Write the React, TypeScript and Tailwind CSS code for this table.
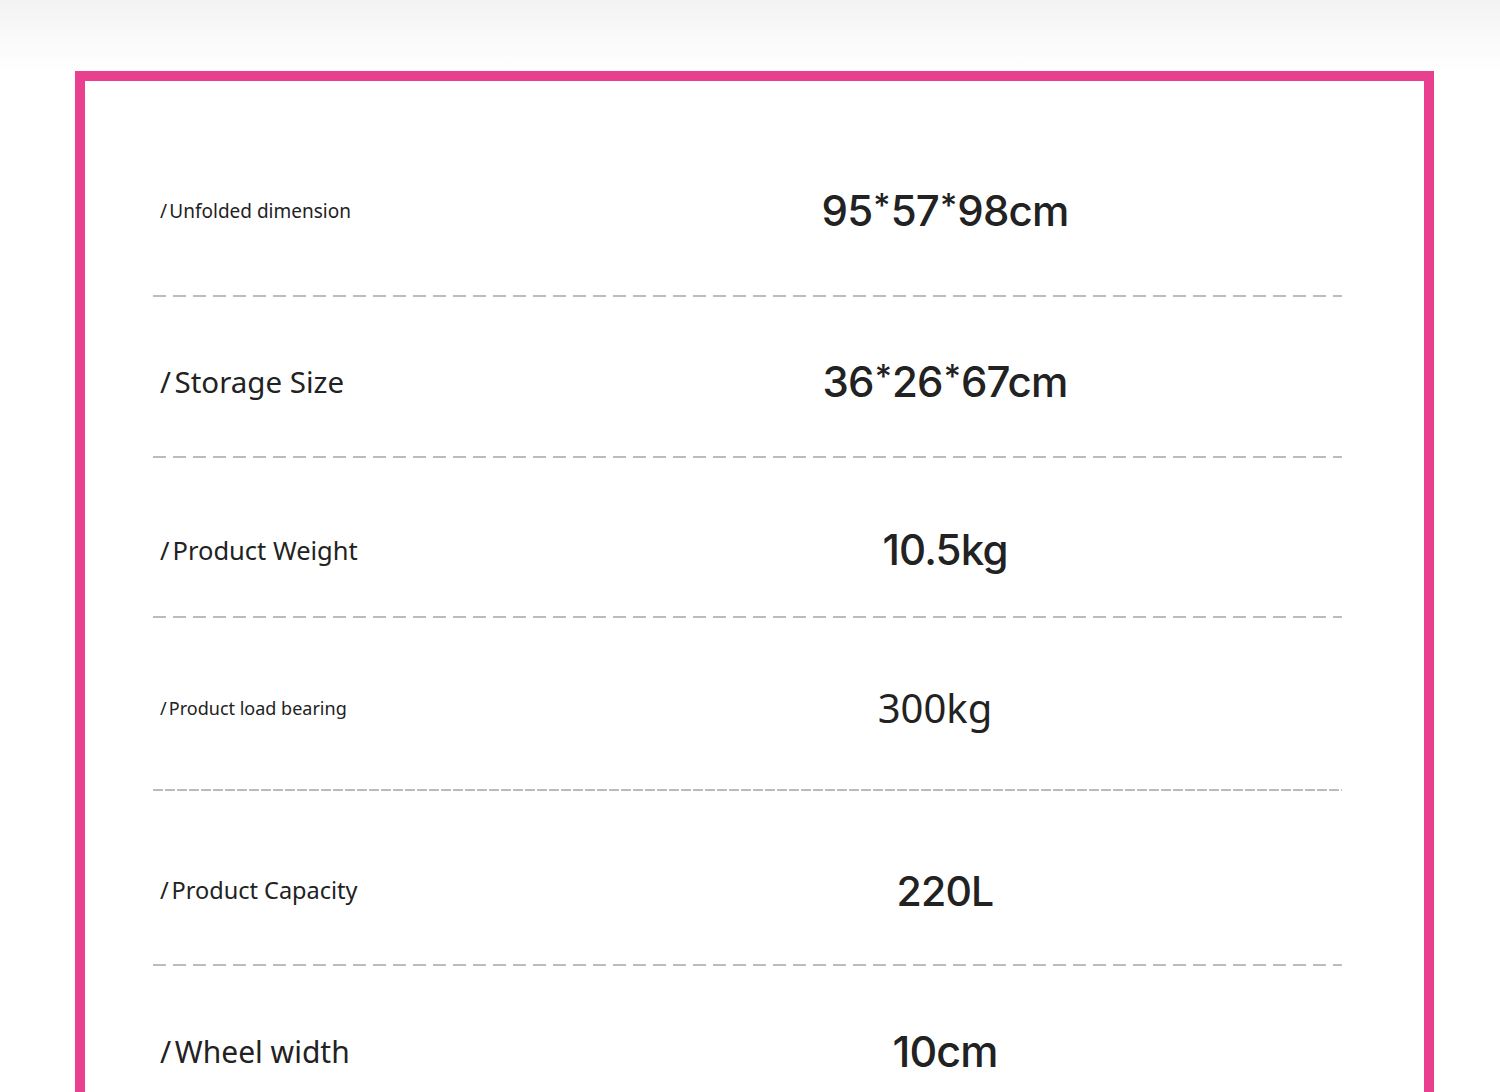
const rows = [
  {
    label: "Unfolded dimension",
    value: "95*57*98cm",
    top: "mt-[100px]",
    labelCls: "text-[19px]",
    valueCls: "font-['Inter',sans-serif] font-medium text-[42px] tracking-[-0.02em]",
    gap: "mt-[54px]",
    dash: "bg-[repeating-linear-gradient(90deg,#bcbcbc_0_13px,transparent_13px_20px)]",
  },
  {
    label: "Storage Size",
    value: "36*26*67cm",
    top: "mt-[55px]",
    labelCls: "text-[29.5px]",
    valueCls: "font-['Inter',sans-serif] font-medium text-[42px] tracking-[-0.02em]",
    gap: "mt-[44px]",
    dash: "bg-[repeating-linear-gradient(90deg,#bcbcbc_0_13px,transparent_13px_20px)]",
  },
  {
    label: "Product Weight",
    value: "10.5kg",
    top: "mt-[62px]",
    labelCls: "text-[25.5px]",
    valueCls: "font-['Inter',sans-serif] font-medium text-[42px] tracking-[-0.02em]",
    gap: "mt-[36px]",
    dash: "bg-[repeating-linear-gradient(90deg,#bcbcbc_0_13px,transparent_13px_20px)]",
  },
  {
    label: "Product load bearing",
    value: "300kg",
    top: "mt-[60px]",
    labelCls: "text-[18px]",
    valueCls: "font-['Noto_Sans',sans-serif] text-[40px] pr-[20px]",
    gap: "mt-[51px]",
    dash: "bg-[repeating-linear-gradient(90deg,#bcbcbc_0_10px,transparent_10px_12px)]",
  },
  {
    label: "Product Capacity",
    value: "220L",
    top: "mt-[70px]",
    labelCls: "text-[23.5px]",
    valueCls: "font-['Inter',sans-serif] font-medium text-[41px] tracking-[-0.02em]",
    gap: "mt-[43px]",
    dash: "bg-[repeating-linear-gradient(90deg,#bcbcbc_0_13px,transparent_13px_20px)]",
  },
  {
    label: "Wheel width",
    value: "10cm",
    top: "mt-[55px]",
    labelCls: "text-[30px]",
    valueCls: "font-['Inter',sans-serif] font-medium text-[43px] tracking-[-0.02em]",
    gap: "",
    dash: "",
  },
];

function Value({ text }: { text: string }) {
  const parts = text.split("*");
  return (
    <>
      {parts.map((p, i) => (
        <span key={i}>
          {i > 0 && <span className="relative -top-[9px] mx-[1px] text-[33px]">*</span>}
          {p}
        </span>
      ))}
    </>
  );
}

export default function App() {
  return (
    <div className="h-[1092px] w-[1500px] overflow-hidden bg-[linear-gradient(to_bottom,#f3f3f3_0px,#fafafa_40px,#ffffff_75px)] font-['Noto_Sans',sans-serif] text-[#222]">
      <div className="ml-[75px] mt-[71px] h-[1200px] w-[1359px] border-[10px] border-[#e8408f] bg-white">
        {rows.map((r) => (
          <div key={r.label}>
            <div className={`flex h-[60px] items-center ${r.top}`}>
              <div className={`w-[665px] pl-[75px] ${r.labelCls}`}>
                <span className="mr-[0.12em]">/</span>
                {r.label}
              </div>
              <div className={`w-[390px] text-center leading-none ${r.valueCls}`}>
                <Value text={r.value} />
              </div>
            </div>
            {r.dash && <div className={`ml-[68px] h-[2px] w-[1189px] ${r.gap} ${r.dash}`} />}
          </div>
        ))}
      </div>
    </div>
  );
}
